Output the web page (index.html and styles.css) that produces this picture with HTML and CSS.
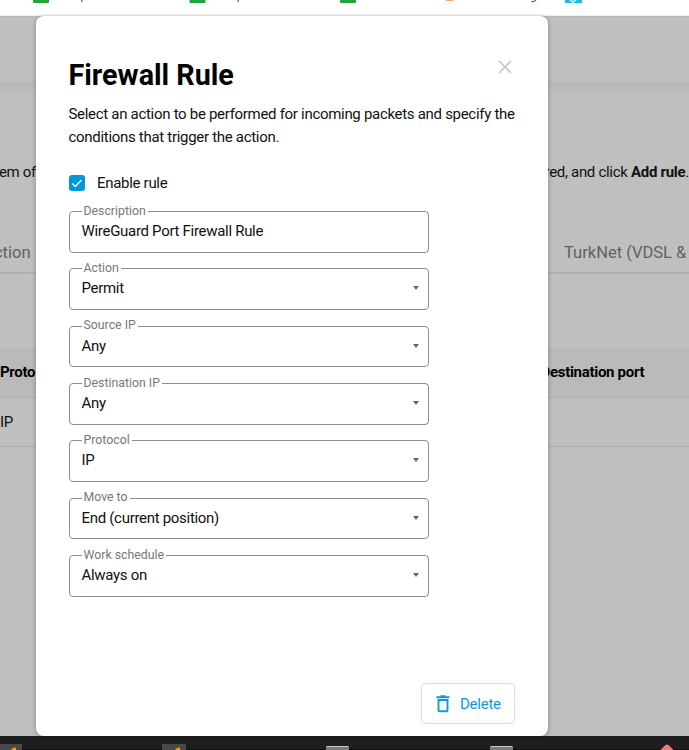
FILE: index.html
```
<!DOCTYPE html>
<html lang="en">
<head>
<meta charset="utf-8">
<title>Firewall Rule</title>
<link rel="stylesheet" href="styles.css">
</head>
<body>
<div class="screen">
  <div class="bookmarks">
    <svg width="689" height="15" viewBox="0 0 689 15" aria-hidden="true">
      <g fill="#20a53a">
        <rect x="33" y="-8" width="16" height="11" rx="1"/>
        <rect x="189.500" y="-8" width="16" height="11" rx="1"/>
        <rect x="340" y="-8" width="16" height="11" rx="1"/>
      </g>
      <path d="M81 0h1.500v2h-1.500zM237.500 0h1.500v2h-1.500z" fill="#777"/>
      <path d="M446 0h7v1h-7z" fill="#ff9c73"/>
      <path d="M531.500 1.300q3 .8 4.500-1.300" fill="none" stroke="#555" stroke-width="1.200"/>
      <rect x="565" y="-8" width="17" height="11" fill="#1cb8f2"/>
      <path d="M570 0l3 2 3-2" fill="none" stroke="#d5f3fd" stroke-width="1.500"/>
    </svg>
  </div>
  <main class="page">
    <div class="page-header"></div>
    <div class="intro"><span class="clip">em of</span><span>red, and click <b>Add rule</b>.</span></div>
    <div class="tabs"><span class="clip">ction</span><span>TurkNet (VDSL &amp;</span></div>
    <div class="row head"><span class="clip">Proto</span><span>Destination port</span></div>
    <div class="row"><span class="clip">IP</span></div>

    <section class="dialog">
      <header class="title">
        <h1>Firewall Rule</h1>
        <svg class="close" width="14" height="14" viewBox="0 0 14 14"><path d="M1 1l12 12M13 1L1 13" fill="none" stroke="#c4c7c9" stroke-width="1.700"/></svg>
      </header>
      <p>Select an action to be performed for incoming packets and specify the conditions that trigger the action.</p>
      <div class="enable">
        <svg width="16" height="16" viewBox="0 0 16 16"><rect width="16" height="16" rx="3" fill="#0097dc"/><path d="M3.300 8.500l3 3 6.200-6.500" fill="none" stroke="#fff" stroke-width="1.300"/></svg>
        <span>Enable rule</span>
      </div>
      <div class="fields">
        <fieldset><legend>Description</legend><span>WireGuard Port Firewall Rule</span></fieldset>
        <fieldset><legend>Action</legend><span>Permit</span><i></i></fieldset>
        <fieldset><legend>Source IP</legend><span>Any</span><i></i></fieldset>
        <fieldset><legend>Destination IP</legend><span>Any</span><i></i></fieldset>
        <fieldset><legend>Protocol</legend><span>IP</span><i></i></fieldset>
        <fieldset><legend>Move to</legend><span>End (current position)</span><i></i></fieldset>
        <fieldset><legend>Work schedule</legend><span>Always on</span><i></i></fieldset>
      </div>
      <div class="delete">
        <svg width="14" height="18" viewBox="0 0 14 18"><path d="M.5 2.200h13M4.500 1.200h5M2.500 5h9v10.500q0 .7-.7.7H3.200q-.7 0-.7-.7z" fill="none" stroke="#0c9bdd" stroke-width="1.900"/></svg>
        <span>Delete</span>
      </div>
    </section>
  </main>
  <div class="taskbar">
    <svg width="689" height="14" viewBox="0 0 689 14" aria-hidden="true">
      <rect width="689" height="14" fill="#1d1e1d"/>
      <path d="M0 13h689v1H0z" fill="#160d11"/>
      <path d="M0 8h22v6H0zM162 8h24v6h-24z" fill="#484848"/>
      <path d="M11 14l2-2 3-.5v2.500zM175 14l2-2 3-.5v2.500z" fill="#f79a0b"/>
      <path d="M326 10h23v4h-23zM490 10h23v4h-23z" fill="#777b7d"/>
      <path d="M327 10h21v1h-21zM491 10h21v1h-21z" fill="#c6c9ca"/>
      <path d="M660.500 14l5-5q1.500-1.200 3 0l5 5z" fill="#f77777"/>
    </svg>
  </div>
</div>
</body>
</html>
```

FILE: styles.css
```
* { box-sizing: border-box; }
body { margin: 0; font-family: Roboto, "Liberation Sans", sans-serif; font-size: 15px; letter-spacing: -.3px; color: #111; }
svg { display: block; flex: none; }
.screen { width: 689px; height: 750px; display: flex; flex-direction: column; overflow: hidden; }
.bookmarks { height: 16px; background: #fff; border-bottom: 1px solid #f0f0f0; }
.page { position: relative; height: 720px; background: #bfbfbf; box-shadow: inset 0 1px #b8b8b8; }
.taskbar { height: 14px; }

.page-header { height: 66px; }
.intro, .tabs, .row { display: grid; grid-template-columns: 36px 1fr; align-items: center; white-space: nowrap; }
.clip { display: flex; }
.intro { height: 150px; background: linear-gradient(#b7b7b7, #bfbfbf 14px); align-content: start; padding-top: 80px; line-height: 20px; column-gap: 508.500px; }
.intro .clip { justify-content: flex-end; }
.tabs { height: 42px; border-bottom: 2px solid #b1b1b1; font-size: 16.500px; letter-spacing: 0; color: #626262; column-gap: 528px; }
.tabs .clip { padding-right: 5.500px; justify-content: flex-end; }
.row { height: 49px; border-bottom: 1px solid #afafaf; column-gap: 504.500px; }
.row.head { height: 50px; margin-top: 74px; padding-bottom: 1px; background: #bababa; color: #000; font-weight: 700; }

.dialog { position: absolute; left: 36px; top: 0; width: 512px; height: 720px; padding: 40px 33px 12px 32.500px; background: #fff; border-radius: 8px; box-shadow: 0 1px 5px rgba(0, 0, 0, .3); display: flex; flex-direction: column; }
.title { display: flex; justify-content: space-between; align-items: flex-start; height: 38px; }
h1 { margin: 0; font-size: 28.700px; line-height: 38px; letter-spacing: 0; color: #000; }
.close { margin: 4px 3px 0 0; }
p { margin: 9px -10px 0 0; width: 455px; line-height: 23px; }
.enable { display: flex; align-items: center; gap: 12.500px; margin-top: 24px; height: 20px; }
.fields { width: 360px; margin-top: 11.600px; display: flex; flex-direction: column; gap: 9.350px; }
fieldset { margin: 0; padding: 0 9px 7px 12px; min-width: 0; height: 48px; border: 1px solid #8e8e8e; border-radius: 4px; position: relative; line-height: 27.500px; }
fieldset span { display: block; }
legend { padding: 0 2px; font-size: 12.300px; letter-spacing: 0; line-height: 13.500px; color: #777; }
fieldset i { position: absolute; right: 9px; top: 11px; border: 3.500px solid transparent; border-top: 4.500px solid #666; border-bottom: 0; }
.delete { margin-top: auto; align-self: flex-end; width: 94px; height: 41px; border: 1px solid #cde3ef; border-radius: 4px; display: flex; align-items: center; gap: 10px; padding-left: 14px; color: #0c9bdd; letter-spacing: -.25px; }
```
